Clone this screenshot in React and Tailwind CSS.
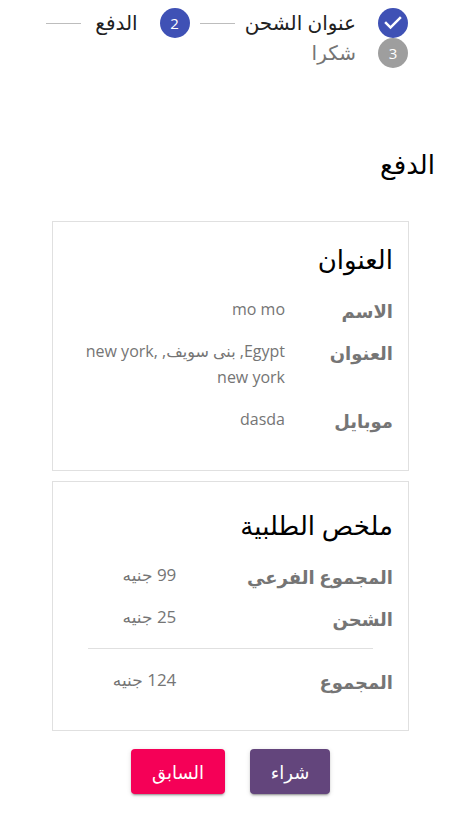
const steps = [
  { label: "عنوان الشحن", state: "done" },
  { label: "الدفع", state: "active", number: 2 },
  { label: "شكرا", state: "next", number: 3 },
];

function StepIcon({ step }) {
  if (step.state === "done") {
    return (
      <svg viewBox="0 0 24 24" className="size-[30px] shrink-0" aria-hidden="true">
        <circle cx="12" cy="12" r="12" fill="#3f51b5" />
        <path d="M10 17l-5-5 1.4-1.4 3.6 3.6 7.6-7.6L19 8l-9 9z" fill="#fff" />
      </svg>
    );
  }
  return (
    <span
      className={`flex size-[30px] shrink-0 items-center justify-center rounded-full text-[15px] font-medium text-white ${
        step.state === "active" ? "bg-[#3f51b5]" : "bg-[#9e9e9e]"
      }`}
    >
      {step.number}
    </span>
  );
}

function Stepper() {
  return (
    <ol className="flex flex-wrap gap-x-[10px] pt-2 pr-[55px] pl-8">
      {steps.map((step) => (
        <li key={step.label} className="flex h-[30px] items-center">
          <StepIcon step={step} />
          <span
            className={`mr-[22px] min-w-[47px] text-xl whitespace-nowrap ${
              step.state === "next" ? "text-[#757575]" : "text-[#212121]"
            }`}
          >
            {step.label}
          </span>
          {step.state !== "next" && <span className="mr-[10px] h-px w-[35px] bg-[#bdbdbd]" />}
        </li>
      ))}
    </ol>
  );
}

function AddressRow({ label, children }) {
  return (
    <div className="flex">
      <dt className="w-[108px] shrink-0 text-lg leading-[30px] font-bold">{label}</dt>
      <dd className="pb-4 text-base leading-[26px]">{children}</dd>
    </div>
  );
}

function SummaryRow({ label, children }) {
  return (
    <div className="flex">
      <dt className="w-2/3 text-lg leading-[30px] font-bold">{label}</dt>
      <dd className="text-[17px] leading-[26px]">{children}</dd>
    </div>
  );
}

const buttonClass =
  "h-[45px] rounded text-lg text-white shadow-[0_3px_1px_-2px_rgba(0,0,0,0.2),0_2px_2px_0_rgba(0,0,0,0.14),0_1px_5px_0_rgba(0,0,0,0.12)]";

export default function App() {
  return (
    <div
      dir="rtl"
      className="min-h-screen bg-white pb-10 font-['Open_Sans','Noto_Sans','DejaVu_Sans',sans-serif] text-[#757575]"
    >
      <Stepper />
      <main className="px-7">
        <h1 className="mt-[78px] text-[26px] leading-9 text-black">الدفع</h1>
        <div className="mt-[39px] mr-[26px] ml-6 flex flex-col gap-[10px]">
          <section className="border border-[#e0e0e0] px-[15px] pt-[18px] pb-[22px]">
            <h2 className="mb-[18px] text-[26px] leading-[38px] text-black">العنوان</h2>
            <dl>
              <AddressRow label="الاسم">mo mo</AddressRow>
              <AddressRow label="العنوان">Egypt, بنى سويف, new york, new york</AddressRow>
              <AddressRow label="موبايل">dasda</AddressRow>
            </dl>
          </section>
          <section className="border border-[#e0e0e0] px-[15px] pt-6 pb-[33px]">
            <h2 className="mb-[18px] text-[26px] leading-[38px] text-black">ملخص الطلبية</h2>
            <dl className="flex flex-col gap-3">
              <SummaryRow label="المجموع الفرعي">99 جنيه</SummaryRow>
              <SummaryRow label="الشحن">25 جنيه</SummaryRow>
            </dl>
            <hr className="mx-5 mt-[14px] mb-[18px] border-[#e0e0e0]" />
            <dl>
              <SummaryRow label="المجموع">124 جنيه</SummaryRow>
            </dl>
          </section>
          <div className="mt-2 flex justify-center gap-[25px]">
            <button type="button" className={`w-20 bg-[#63457c] ${buttonClass}`}>
              شراء
            </button>
            <button type="button" className={`w-[94px] bg-[#f50057] ${buttonClass}`}>
              السابق
            </button>
          </div>
        </div>
      </main>
    </div>
  );
}
